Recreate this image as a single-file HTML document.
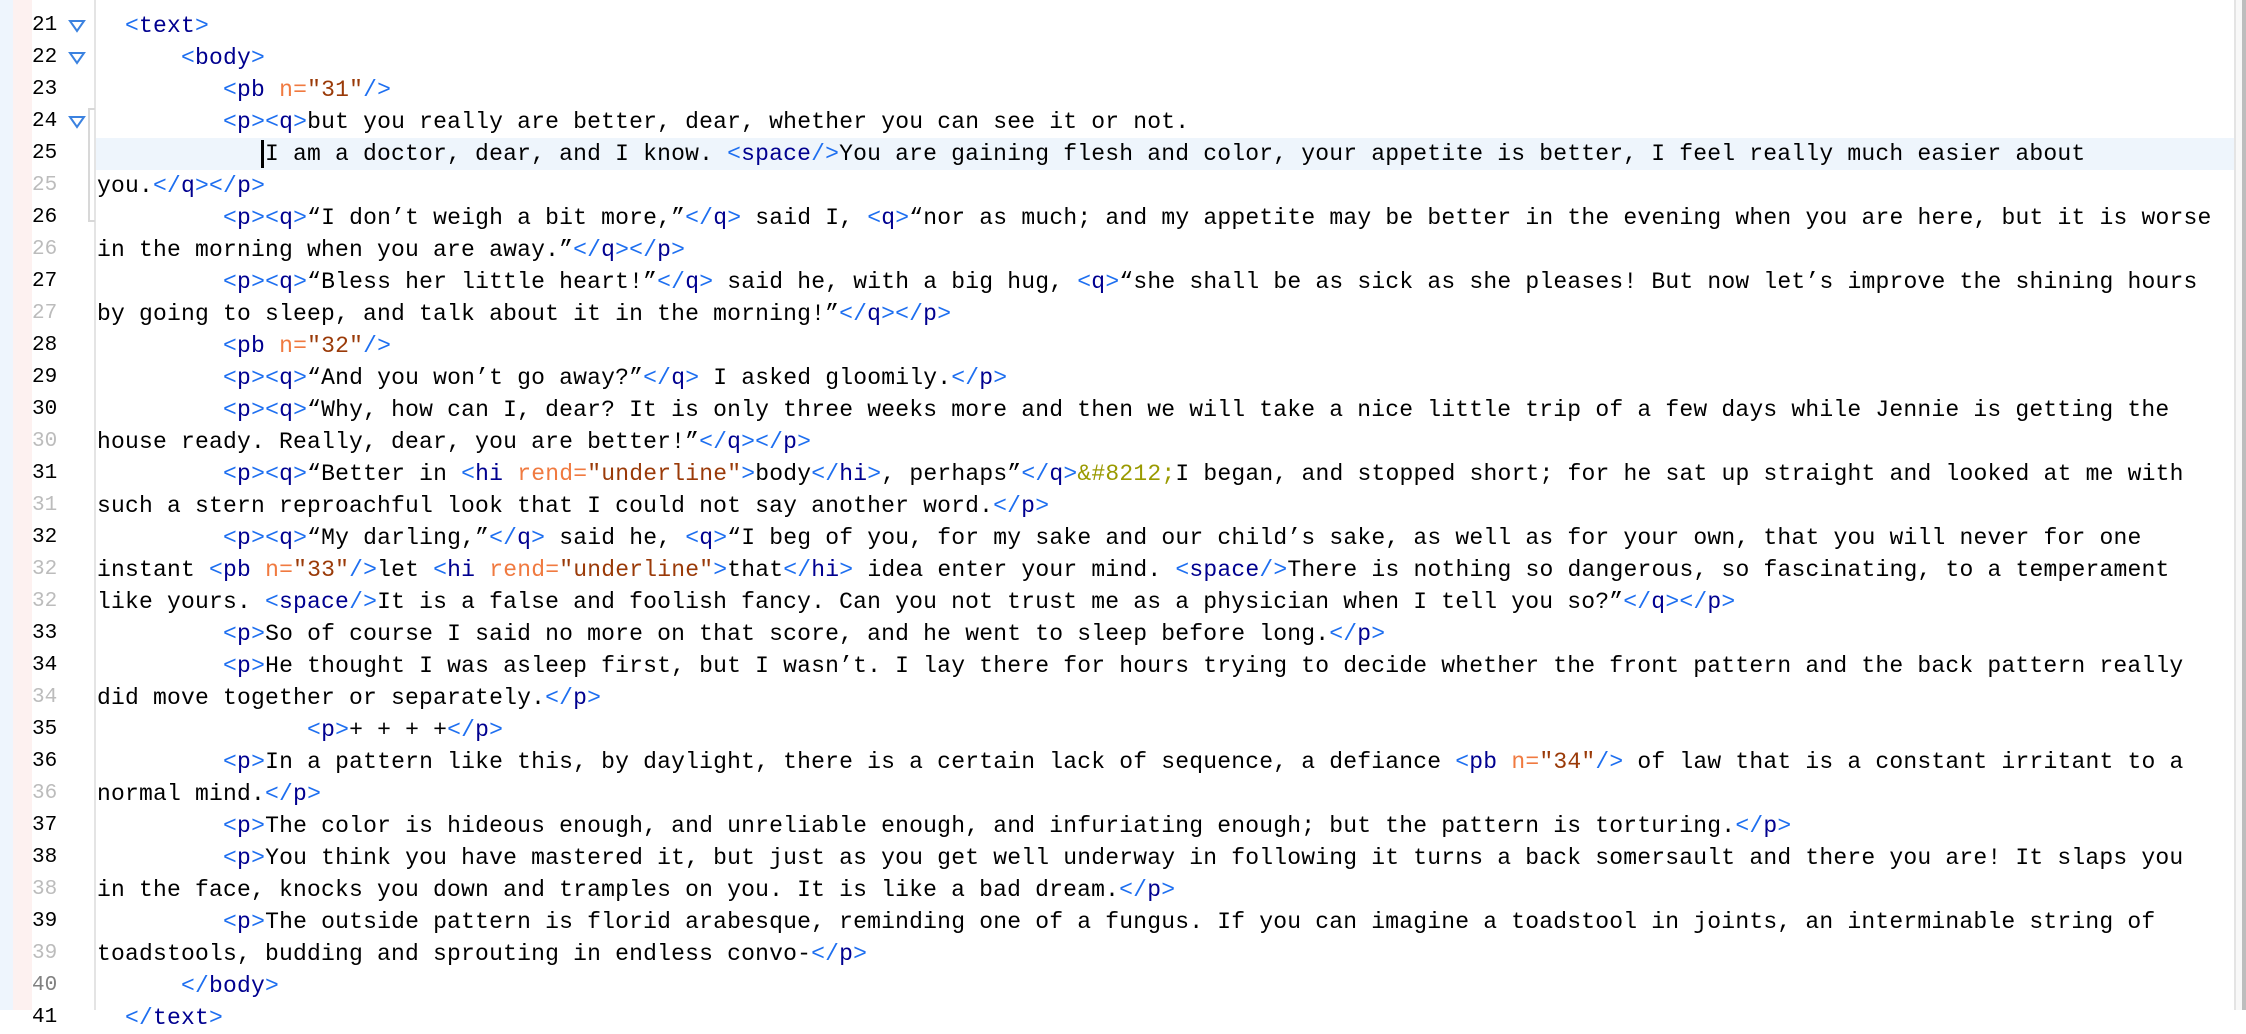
<!DOCTYPE html>
<html><head><meta charset="utf-8"><style>
html,body{margin:0;padding:0;width:2246px;height:1010px;overflow:hidden;background:#fff;}
.bl{position:absolute;left:0;top:0;width:13px;height:1010px;background:#eef5fd}
.pk{position:absolute;left:13px;top:0;width:19px;height:1010px;background:#fdf1f0}
.vl{position:absolute;left:94px;top:0;width:2px;height:1010px;background:#e4e4e4}
.hl{position:absolute;left:96px;top:138px;width:2138px;height:32px;background:#eef5fc}
.sb1{position:absolute;left:2234px;top:0;width:2px;height:1010px;background:#e4e4e4}
.sb2{position:absolute;left:2236px;top:0;width:6px;height:1010px;background:#f8f8f8}
.sb3{position:absolute;left:2242px;top:0;width:4px;height:1010px;background:#bdbdbd}
.code,.gut{position:absolute;top:-22px;font-family:"Liberation Mono",monospace;font-size:23px;line-height:32px;color:#000}
.code{left:97px;letter-spacing:0.2px}
.gut{left:32px;width:22px;text-align:right;font-size:21px}
.gut div{height:32px}
.code div{height:32px;white-space:pre}
.g{color:#bcbcbc}
k{color:#1e6ff0}n{color:#00008f}a{color:#f07a40}v{color:#9a3a08}e{color:#9a9a00}
.cur{position:absolute;left:261px;top:140px;width:3px;height:28px;background:#000}
.fold{position:absolute;left:68px}
.br{position:absolute;left:88px;top:108px;width:5px;height:110px;border:2px solid #d8d8d8;border-right:none}
</style></head><body>
<div class="bl"></div><div class="pk"></div><div class="vl"></div><div class="hl"></div>
<div class="sb1"></div><div class="sb2"></div><div class="sb3"></div>
<div class="br"></div>
<svg class="fold" style="top:19px" width="18" height="14"><path d="M2 2 L16 2 L9 12 Z" fill="none" stroke="#3b82e0" stroke-width="2"/></svg>
<svg class="fold" style="top:51px" width="18" height="14"><path d="M2 2 L16 2 L9 12 Z" fill="none" stroke="#3b82e0" stroke-width="2"/></svg>
<svg class="fold" style="top:115px" width="18" height="14"><path d="M2 2 L16 2 L9 12 Z" fill="none" stroke="#3b82e0" stroke-width="2"/></svg>
<div class="gut"><div class="g">20</div><div>21</div><div>22</div><div>23</div><div>24</div><div>25</div><div class="g">25</div><div>26</div><div class="g">26</div><div>27</div><div class="g">27</div><div>28</div><div>29</div><div>30</div><div class="g">30</div><div>31</div><div class="g">31</div><div>32</div><div class="g">32</div><div class="g">32</div><div>33</div><div>34</div><div class="g">34</div><div>35</div><div>36</div><div class="g">36</div><div>37</div><div>38</div><div class="g">38</div><div>39</div><div class="g">39</div><div style="color:#808080">40</div><div>41</div></div>
<div class="code"><div>  <k>&lt;/</k><n>teiHeader</n><k>&gt;</k></div><div>  <k>&lt;</k><n>text</n><k>&gt;</k></div><div>      <k>&lt;</k><n>body</n><k>&gt;</k></div><div>         <k>&lt;</k><n>pb</n> <a>n=</a><v>"31"</v><k>/&gt;</k></div><div>         <k>&lt;</k><n>p</n><k>&gt;&lt;</k><n>q</n><k>&gt;</k>but you really are better, dear, whether you can see it or not.</div><div>            I am a doctor, dear, and I know. <k>&lt;</k><n>space</n><k>/&gt;</k>You are gaining flesh and color, your appetite is better, I feel really much easier about</div><div>you.<k>&lt;/</k><n>q</n><k>&gt;&lt;/</k><n>p</n><k>&gt;</k></div><div>         <k>&lt;</k><n>p</n><k>&gt;&lt;</k><n>q</n><k>&gt;</k>“I don’t weigh a bit more,”<k>&lt;/</k><n>q</n><k>&gt;</k> said I, <k>&lt;</k><n>q</n><k>&gt;</k>“nor as much; and my appetite may be better in the evening when you are here, but it is worse</div><div>in the morning when you are away.”<k>&lt;/</k><n>q</n><k>&gt;&lt;/</k><n>p</n><k>&gt;</k></div><div>         <k>&lt;</k><n>p</n><k>&gt;&lt;</k><n>q</n><k>&gt;</k>“Bless her little heart!”<k>&lt;/</k><n>q</n><k>&gt;</k> said he, with a big hug, <k>&lt;</k><n>q</n><k>&gt;</k>“she shall be as sick as she pleases! But now let’s improve the shining hours</div><div>by going to sleep, and talk about it in the morning!”<k>&lt;/</k><n>q</n><k>&gt;&lt;/</k><n>p</n><k>&gt;</k></div><div>         <k>&lt;</k><n>pb</n> <a>n=</a><v>"32"</v><k>/&gt;</k></div><div>         <k>&lt;</k><n>p</n><k>&gt;&lt;</k><n>q</n><k>&gt;</k>“And you won’t go away?”<k>&lt;/</k><n>q</n><k>&gt;</k> I asked gloomily.<k>&lt;/</k><n>p</n><k>&gt;</k></div><div>         <k>&lt;</k><n>p</n><k>&gt;&lt;</k><n>q</n><k>&gt;</k>“Why, how can I, dear? It is only three weeks more and then we will take a nice little trip of a few days while Jennie is getting the</div><div>house ready. Really, dear, you are better!”<k>&lt;/</k><n>q</n><k>&gt;&lt;/</k><n>p</n><k>&gt;</k></div><div>         <k>&lt;</k><n>p</n><k>&gt;&lt;</k><n>q</n><k>&gt;</k>“Better in <k>&lt;</k><n>hi</n> <a>rend=</a><v>"underline"</v><k>&gt;</k>body<k>&lt;/</k><n>hi</n><k>&gt;</k>, perhaps”<k>&lt;/</k><n>q</n><k>&gt;</k><e>&amp;#8212;</e>I began, and stopped short; for he sat up straight and looked at me with</div><div>such a stern reproachful look that I could not say another word.<k>&lt;/</k><n>p</n><k>&gt;</k></div><div>         <k>&lt;</k><n>p</n><k>&gt;&lt;</k><n>q</n><k>&gt;</k>“My darling,”<k>&lt;/</k><n>q</n><k>&gt;</k> said he, <k>&lt;</k><n>q</n><k>&gt;</k>“I beg of you, for my sake and our child’s sake, as well as for your own, that you will never for one</div><div>instant <k>&lt;</k><n>pb</n> <a>n=</a><v>"33"</v><k>/&gt;</k>let <k>&lt;</k><n>hi</n> <a>rend=</a><v>"underline"</v><k>&gt;</k>that<k>&lt;/</k><n>hi</n><k>&gt;</k> idea enter your mind. <k>&lt;</k><n>space</n><k>/&gt;</k>There is nothing so dangerous, so fascinating, to a temperament</div><div>like yours. <k>&lt;</k><n>space</n><k>/&gt;</k>It is a false and foolish fancy. Can you not trust me as a physician when I tell you so?”<k>&lt;/</k><n>q</n><k>&gt;&lt;/</k><n>p</n><k>&gt;</k></div><div>         <k>&lt;</k><n>p</n><k>&gt;</k>So of course I said no more on that score, and he went to sleep before long.<k>&lt;/</k><n>p</n><k>&gt;</k></div><div>         <k>&lt;</k><n>p</n><k>&gt;</k>He thought I was asleep first, but I wasn’t. I lay there for hours trying to decide whether the front pattern and the back pattern really</div><div>did move together or separately.<k>&lt;/</k><n>p</n><k>&gt;</k></div><div>               <k>&lt;</k><n>p</n><k>&gt;</k>+ + + +<k>&lt;/</k><n>p</n><k>&gt;</k></div><div>         <k>&lt;</k><n>p</n><k>&gt;</k>In a pattern like this, by daylight, there is a certain lack of sequence, a defiance <k>&lt;</k><n>pb</n> <a>n=</a><v>"34"</v><k>/&gt;</k> of law that is a constant irritant to a</div><div>normal mind.<k>&lt;/</k><n>p</n><k>&gt;</k></div><div>         <k>&lt;</k><n>p</n><k>&gt;</k>The color is hideous enough, and unreliable enough, and infuriating enough; but the pattern is torturing.<k>&lt;/</k><n>p</n><k>&gt;</k></div><div>         <k>&lt;</k><n>p</n><k>&gt;</k>You think you have mastered it, but just as you get well underway in following it turns a back somersault and there you are! It slaps you</div><div>in the face, knocks you down and tramples on you. It is like a bad dream.<k>&lt;/</k><n>p</n><k>&gt;</k></div><div>         <k>&lt;</k><n>p</n><k>&gt;</k>The outside pattern is florid arabesque, reminding one of a fungus. If you can imagine a toadstool in joints, an interminable string of</div><div>toadstools, budding and sprouting in endless convo-<k>&lt;/</k><n>p</n><k>&gt;</k></div><div>      <k>&lt;/</k><n>body</n><k>&gt;</k></div><div>  <k>&lt;/</k><n>text</n><k>&gt;</k></div></div>
<div class="cur"></div>
</body></html>
